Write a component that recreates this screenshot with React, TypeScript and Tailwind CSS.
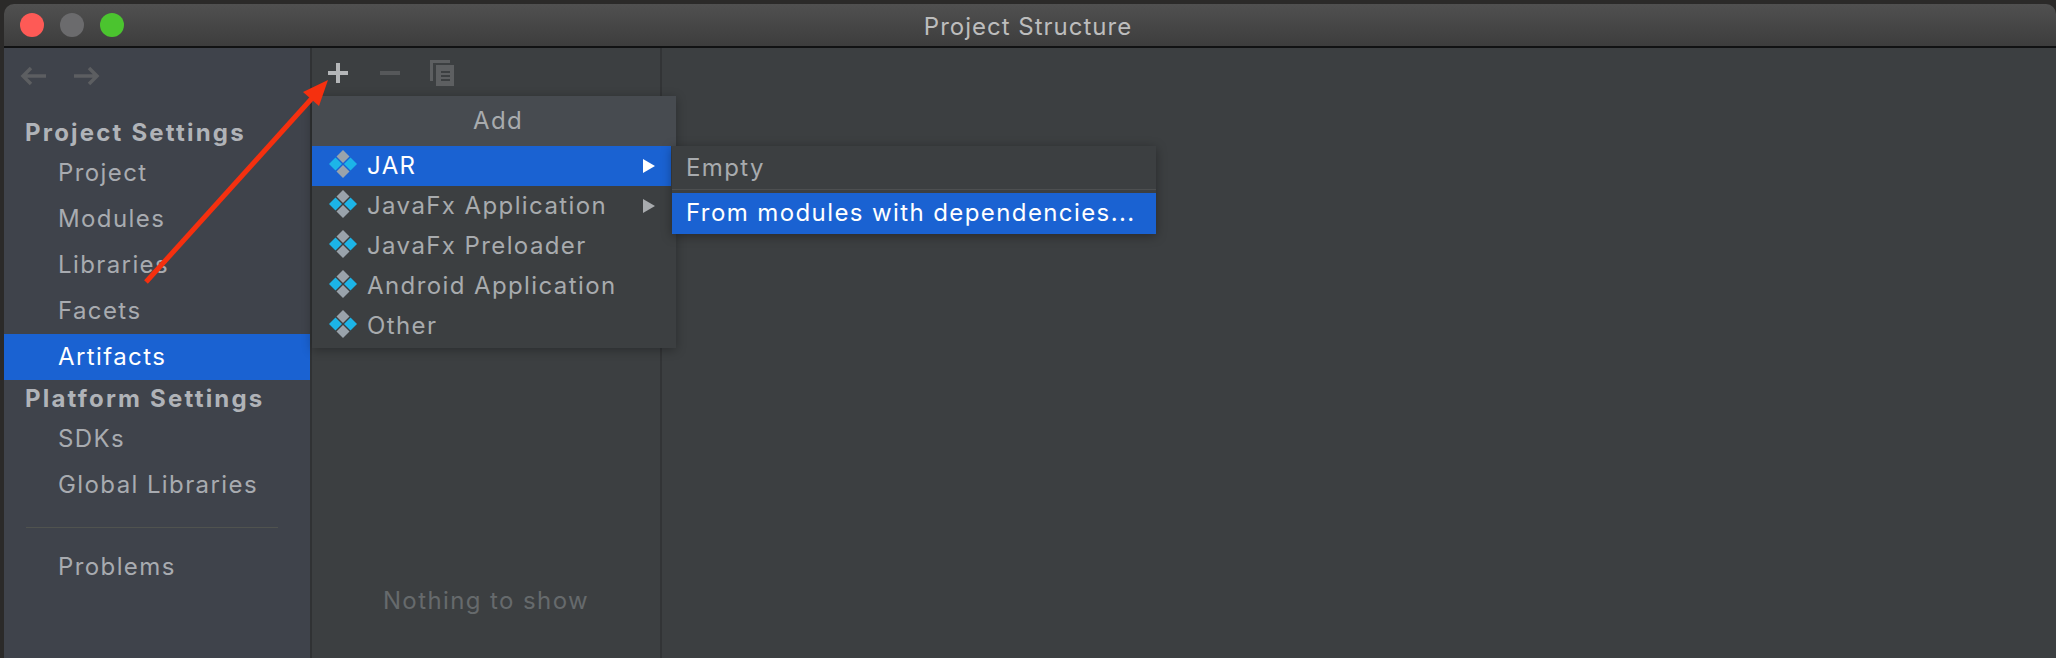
import React from 'react';

const font = { fontFamily: 'Inter, "Noto Sans", sans-serif' };

// artifact icon, four small diamonds
function Gem() {
  return (
    <svg width="28" height="28" viewBox="0 0 28 28" className="shrink-0 -translate-y-[2px]">
      <path d="M14 0l6.5 6.5-6.5 6.5-6.500-6.500z" fill="#9aa3ab" />
      <path d="M14 15l6.500 6.500-6.500 6.500-6.500-6.500z" fill="#9aa3ab" />
      <path d="M6.500 7.500l6.500 6.500-6.500 6.500L0 14z" fill="#1cb5e8" />
      <path d="M21.500 7.500L28 14l-6.500 6.500L15 14z" fill="#1cb5e8" />
    </svg>
  );
}

function Caret({ color }: { color: string }) {
  return (
    <svg width="12" height="14" viewBox="0 0 12 14" className="shrink-0">
      <path d="M0 0l12 7-12 7z" fill={color} />
    </svg>
  );
}

function SideHeader({ label, first }: { label: string; first?: boolean }) {
  return (
    <div className={`${first ? 'h-[37px]' : 'h-[36px]'} pt-[2px] pl-[21px] flex items-center text-[24px] font-bold text-[#b0b3b8] tracking-[2.200px]`}>
      {label}
    </div>
  );
}

function SideItem({ label, active }: { label: string; active?: boolean }) {
  return (
    <div className={`h-[46px] pl-[54px] flex items-center text-[24px] tracking-[1.400px] ${active ? 'bg-[#1a62d2] text-white' : 'text-[#a8abb0]'}`}>
      {label}
    </div>
  );
}

function AddRow({ label, active, more }: { label: string; active?: boolean; more?: boolean }) {
  return (
    <div className={`h-[40px] pl-[17px] pr-[16px] pb-[1px] flex items-center gap-[10px] text-[24px] tracking-[1.400px] ${active ? 'bg-[#1a62d2] text-white' : 'text-[#a8abae]'}`}>
      <Gem />
      <span className="flex-1">{label}</span>
      {more && <Caret color={active ? '#ffffff' : '#a8abae'} />}
    </div>
  );
}

export default function App() {
  return (
    <div className="relative w-[2056px] h-[658px] overflow-hidden bg-[#2b2a29] pt-[4px] pl-[4px]" style={font}>
      <div className="h-full flex flex-col rounded-t-[10px] overflow-hidden">
        {/* title bar */}
        <div className="relative h-[44px] shrink-0 flex items-center border-b-2 border-[#111213] bg-gradient-to-b from-[#505050] to-[#3d3d3d]">
          <div className="flex gap-[16px] pl-[16px]">
            <div className="w-[24px] h-[24px] rounded-full bg-[#fe5a56]" />
            <div className="w-[24px] h-[24px] rounded-full bg-[#6b6b6d]" />
            <div className="w-[24px] h-[24px] rounded-full bg-[#4bc42f]" />
          </div>
          <div className="absolute inset-0 pt-[4px] pr-[4px] flex items-center justify-center text-[24px] text-[#bdbdbd] tracking-[1px]">Project Structure</div>
        </div>

        <div className="flex-1 flex min-h-0">
          {/* left nav */}
          <div className="w-[308px] shrink-0 flex flex-col bg-[#3f434b] border-r-2 border-[#303234]">
            <div className="h-[65px] pt-[18px] pl-[16px] flex gap-[28px] items-start">
              <svg width="26" height="20" viewBox="0 0 26 20" fill="none" stroke="#5c5e61" strokeWidth="3.5">
                <path d="M26 10H3M11 2l-8 8 8 8" />
              </svg>
              <svg width="26" height="20" viewBox="0 0 26 20" fill="none" stroke="#5c5e61" strokeWidth="3.5">
                <path d="M0 10h23M15 2l8 8-8 8" />
              </svg>
            </div>
            <SideHeader label="Project Settings" first />
            <SideItem label="Project" />
            <SideItem label="Modules" />
            <SideItem label="Libraries" />
            <SideItem label="Facets" />
            <SideItem label="Artifacts" active />
            <SideHeader label="Platform Settings" />
            <SideItem label="SDKs" />
            <SideItem label="Global Libraries" />
            <div className="h-px ml-[22px] mr-[32px] mt-[19px] mb-[16px] bg-[#50534f]" />
            <SideItem label="Problems" />
          </div>

          {/* artifacts list */}
          <div className="w-[350px] shrink-0 flex flex-col bg-[#3c3f41] border-r-2 border-[#323436]">
            <div className="h-[49px] shrink-0 pl-[16px] flex items-center gap-[32px]">
              <svg width="20" height="20" viewBox="0 0 20 20" fill="#b4b6b8">
                <path d="M8 0h4v8h8v4h-8v8H8v-8H0V8h8z" />
              </svg>
              <svg width="20" height="20" viewBox="0 0 20 20" fill="#56585a">
                <path d="M0 8h20v4H0z" />
              </svg>
              <svg width="24" height="26" viewBox="0 0 24 26" className="-ml-[2px]">
                <path d="M0 0h20v3H3v18H0z" fill="#5d5f61" />
                <path d="M6 5h18v21H6z" fill="#5d5f61" />
                <path d="M11 11h9v2h-9zM11 15h9v2h-9zM11 19h9v2h-9z" fill="#3c3f41" />
              </svg>
            </div>
            <div className="flex-1 flex items-end justify-center pb-[39px] text-[24px] text-[#666a6c] tracking-[1.400px]">Nothing to show</div>
          </div>

          <div className="flex-1 bg-[#3c3f41]" />
        </div>
      </div>

      {/* Add popup */}
      <div className="absolute left-[312px] top-[96px] w-[364px] bg-[#3c3f41] shadow-[0_2px_10px_rgba(0,0,0,0.3)] pb-[2px]">
        <div className="h-[50px] pl-[8px] pb-[1px] flex items-center justify-center text-[24px] text-[#a8abae] bg-[#474b50] tracking-[1.400px]">Add</div>
        <div className="pr-[5px]">
          <AddRow label="JAR" active more />
          <AddRow label="JavaFx Application" more />
          <AddRow label="JavaFx Preloader" />
          <AddRow label="Android Application" />
          <AddRow label="Other" />
        </div>
      </div>

      {/* JAR submenu */}
      <div className="absolute left-[672px] top-[146px] w-[484px] bg-[#3c3f41] shadow-[0_2px_10px_rgba(0,0,0,0.35)] text-[24px] tracking-[1.400px]">
        <div className="h-[44px] pl-[14px] flex items-center text-[#a8abae] border-b border-[#4d4f50]">Empty</div>
        <div className="h-[3px]" />
        <div className="h-[41px] pl-[14px] pb-[1px] flex items-center bg-[#1a62d2] text-white">From modules with dependencies...</div>
      </div>

      {/* red annotation arrow */}
      <svg className="absolute left-0 top-0 pointer-events-none" width="2056" height="658" fill="none">
        <path d="M146 282L314 96" stroke="#f5300f" strokeWidth="5" />
        <path d="M328 80L303 92L319 106z" fill="#f5300f" />
      </svg>
    </div>
  );
}
